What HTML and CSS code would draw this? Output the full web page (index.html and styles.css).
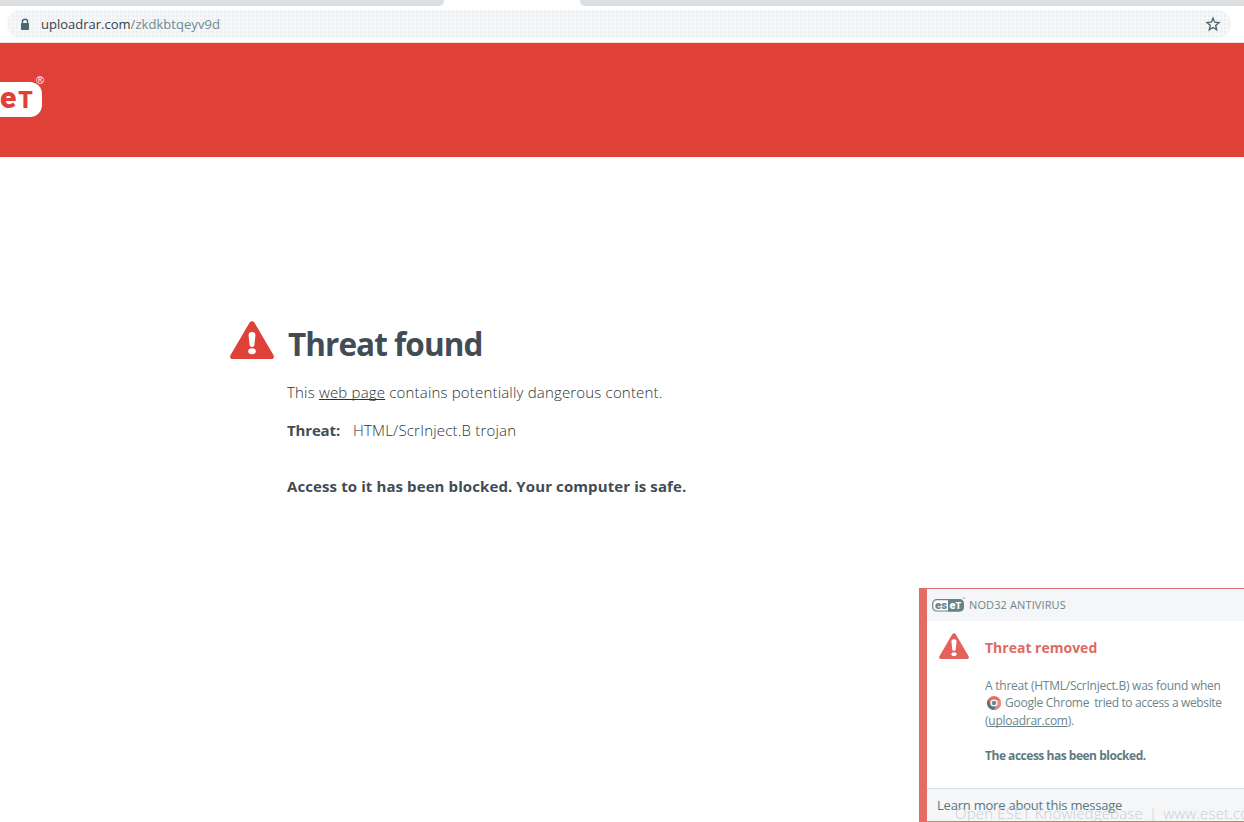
FILE: index.html
```html
<!DOCTYPE html>
<html lang="en">
<head>
<meta charset="utf-8">
<title>Threat found</title>
<link rel="stylesheet" href="styles.css">
</head>
<body>
<div class="window">
  <header class="browser">
    <div class="tabs"><div class="tab tab-left"></div><div class="tab tab-right"></div></div>
    <div class="address">
      <svg class="lock" viewBox="0 0 10 12"><path d="M2.4 5V3.4a2.6 2.6 0 0 1 5.2 0V5" fill="none" stroke="#4a686f" stroke-width="1.4"/><rect x="1" y="4.5" width="8" height="7" rx="1" fill="#4a686f"/></svg>
      <span class="url"><span class="host">uploadrar.com</span><span class="path">/zkdkbtqeyv9d</span></span>
      <svg class="star" viewBox="0 0 16 16"><path d="M8 2.200l1.700 4 4.300.4-3.300 2.800 1 4.300L8 11.500l-3.700 2.200 1-4.300L2 6.600l4.300-.4z" fill="none" stroke="#4a686f" stroke-width="1.400"/></svg>
    </div>
  </header>
  <div class="banner">
    <div class="logo"><span class="logo-text">e<span class="logo-t">T</span></span><span class="reg">®</span></div>
  </div>
  <main class="content">
    <svg class="warning" viewBox="0 0 44 38"><path d="M19.6 1.4Q22-1 24.4 1.4L43.400 34Q45 38 41 38H3Q-1 38 .6 34Z" fill="#df4139"/><path d="M22 11c2.500 0 3.600 1.200 3.400 3.500L24.400 24c-.2 2.600-4.600 2.600-4.800 0L18.600 14.500C18.400 12.200 19.500 11 22 11Z" fill="#fff"/><ellipse cx="22" cy="30.300" rx="3.800" ry="3" fill="#fff"/></svg>
    <div class="message">
      <h1><span>Threat found</span></h1>
      <p class="lead"><span>This <u>web page</u> contains potentially dangerous content.</span></p>
      <p class="detail"><b>Threat:</b><span>HTML/ScrInject.B trojan</span></p>
      <p class="result"><b>Access to it has been blocked. Your computer is safe.</b></p>
    </div>
  </main>
  <aside class="toast">
    <div class="toast-head">
      <svg class="mini-logo" viewBox="0 0 33 14"><rect x=".7" y="1.700" width="30.600" height="11.300" rx="4" fill="#fff" stroke="#688287" stroke-width="1.200"/><path d="M16 1.200h11.500q4.300 0 4.300 4.300v3.700q0 4.300-4.300 4.300H16Z" fill="#688287"/><text x="3" y="10.500" class="mini-a" textLength="12" lengthAdjust="spacingAndGlyphs">es</text><text x="17.500" y="10.500" class="mini-b">e</text><text x="23.500" y="10.500" class="mini-b mini-t">T</text><circle cx="32" cy="0" r=".7" fill="#688287"/></svg>
      <span class="product">NOD32 ANTIVIRUS</span>
    </div>
    <div class="toast-body">
      <svg class="toast-warning" viewBox="0 0 44 38"><path d="M19.600 1.400Q22-1 24.400 1.400L43.400 34Q45 38 41 38H3Q-1 38 .6 34Z" fill="#e4625b"/><path d="M22 9c2.700 0 3.900 1.200 3.700 3.500L24.600 24c-.2 2.600-5 2.600-5.200 0L18.300 12.500C18.100 10.200 19.300 9 22 9Z" fill="#fff"/><ellipse cx="22" cy="31" rx="3.800" ry="3" fill="#fff"/></svg>
      <div class="toast-text">
        <h2><span>Threat removed</span></h2>
        <div class="line l1"><span>A threat (HTML/ScrInject.B) was found when</span></div>
        <div class="line l2"><svg class="chrome" viewBox="0 0 14 14"><circle cx="7" cy="7" r="7" fill="#e27069"/><path d="M.9 3.600A7 7 0 0 0 7 14L10 8.700 4 8.700Z" fill="#56777e"/><path d="M7 14A7 7 0 0 0 13.300 4H8L10 8.700Z" fill="#e58c86"/><circle cx="7" cy="7" r="3.600" fill="#fff"/><circle cx="7" cy="7" r="2.300" fill="#688c9b"/></svg><span class="app">Google Chrome</span><span class="tried">tried to access a website</span></div>
        <div class="line l3"><span>(<u>uploadrar.com</u>).</span></div>
        <div class="line l4"><b>The access has been blocked.</b></div>
      </div>
    </div>
    <div class="toast-foot">
      <span class="learn">Learn more about this message</span>
      <div class="ghost"><span>Open ESET Knowledgebase</span><span>|</span><span>www.eset.com</span></div>
    </div>
  </aside>
</div>
</body>
</html>
```
FILE: styles.css
```css
* { box-sizing: border-box; }
body { margin: 0; background: #fff; font-family: "Open Sans", "Noto Sans", sans-serif; color: #414c55; }
h1, h2, p { margin: 0; }
span, b { white-space: nowrap; }
b { font-weight: 700; }
svg { flex: none; display: block; }
.window { position: relative; width: 1244px; height: 822px; overflow: hidden; display: flex; flex-direction: column; }
.browser { height: 43px; flex: none; border-bottom: 1px solid #f8dcda; }
.tabs { height: 6px; display: flex; justify-content: space-between; }
.tab { background: #dbdfe1; }
.tab-left { width: 444px; border-bottom-right-radius: 5px; }
.tab-right { width: 664px; border-bottom-left-radius: 5px; }
.address { margin: 4px 13px 0 7px; height: 28px; border-radius: 14px; display: flex; align-items: center; padding: 0 10px 0 13px; background-color: #f5f7f8; background-image: radial-gradient(circle, #eaedef 0.7px, transparent 0.8px); background-size: 4px 4px; }
.lock { width: 10px; height: 13px; margin-right: 11px; }
.url { flex: 1; font-size: 13px; line-height: 20px; }
.host { color: #35434a; }
.path { color: #6d8b8e; letter-spacing: 0.05px; }
.star { width: 16px; height: 16px; }
.banner { height: 114px; flex: none; background: #df4139; padding-top: 39px; }
.logo { position: relative; width: 42px; height: 35px; background: #fff; border-radius: 0 12px 12px 0; }
.logo-text { display: flex; align-items: baseline; gap: 2px; color: #df4139; font: 900 30px/31px "Roboto", sans-serif; }
.logo-t { font-size: 23px; line-height: 1; }
.reg { position: absolute; left: 36px; top: -8px; color: #fff; font: 11px/12px "Liberation Sans", sans-serif; }
.content { display: flex; padding: 164px 0 0 230px; gap: 14px; }
.warning { width: 44px; height: 38px; }
h1 { font-size: 31.5px; line-height: 46px; font-weight: 700; letter-spacing: -0.95px; }
.lead, .detail, .result { font-size: 15px; line-height: 20px; margin-left: -1px; }
.lead { margin-top: 15px; font-weight: 300; letter-spacing: 0.18px; color: #29323a; }
.detail { margin-top: 18px; display: flex; gap: 12px; font-weight: 300; letter-spacing: 0.2px; color: #29323a; }
.detail b { width: 54px; letter-spacing: -0.15px; color: #414c55; }
.result { margin-top: 36px; letter-spacing: 0.1px; }
u { text-underline-offset: 1px; text-decoration-thickness: 1px; text-decoration-skip-ink: none; }
.toast { position: absolute; left: 919px; top: 588px; width: 325px; height: 234px; background: #fff; border-left: 8px solid #e56b65; border-top: 1px solid #d9706b; border-bottom: 1px solid #df7772; display: flex; flex-direction: column; color: #6d8589; }
.toast-head { height: 32px; background: #f5f6f8; display: flex; align-items: center; padding: 0 0 1px 5px; gap: 4px; }
.mini-logo { width: 33px; height: 14px; overflow: visible; }
.mini-a, .mini-b { font: 900 11px Roboto, sans-serif; fill: #688287; }
.mini-b { fill: #fff; }
.mini-b.mini-t { font-size: 9px; }
.product { font-size: 11px; letter-spacing: 0.12px; }
.toast-body { flex: 1; display: flex; padding: 11px 0 0 12px; gap: 16px; }
.toast-warning { width: 30px; height: 28px; }
.toast-text { padding-top: 6px; font-size: 12px; }
h2 { color: #df6963; font-size: 14px; line-height: 20px; font-weight: 700; }
.line { line-height: 18px; height: 18px; display: flex; align-items: center; }
.l1 { margin-top: 19px; letter-spacing: -0.24px; }
.l2 { height: 16px; padding-left: 2px; letter-spacing: -0.36px; }
.l3 { margin-top: 1px; letter-spacing: -0.25px; }
.chrome { width: 14px; height: 14px; margin-right: 4px; }
.app { margin-right: 5px; letter-spacing: -0.25px; }
.l4 { margin-top: 17px; color: #5f7a80; letter-spacing: -0.48px; }
.toast-foot { position: relative; height: 33px; border-top: 1px solid #dde1e4; background: #f5f6f8; padding: 6px 0 0 10px; overflow: hidden; }
.learn { display: block; font-size: 13px; line-height: 20px; letter-spacing: -0.22px; color: #58777c; }
.ghost { position: absolute; left: 28px; top: 14px; display: flex; gap: 6px; font-size: 15px; line-height: 20px; font-weight: 300; letter-spacing: 0.18px; color: #c9ced2; }
```
